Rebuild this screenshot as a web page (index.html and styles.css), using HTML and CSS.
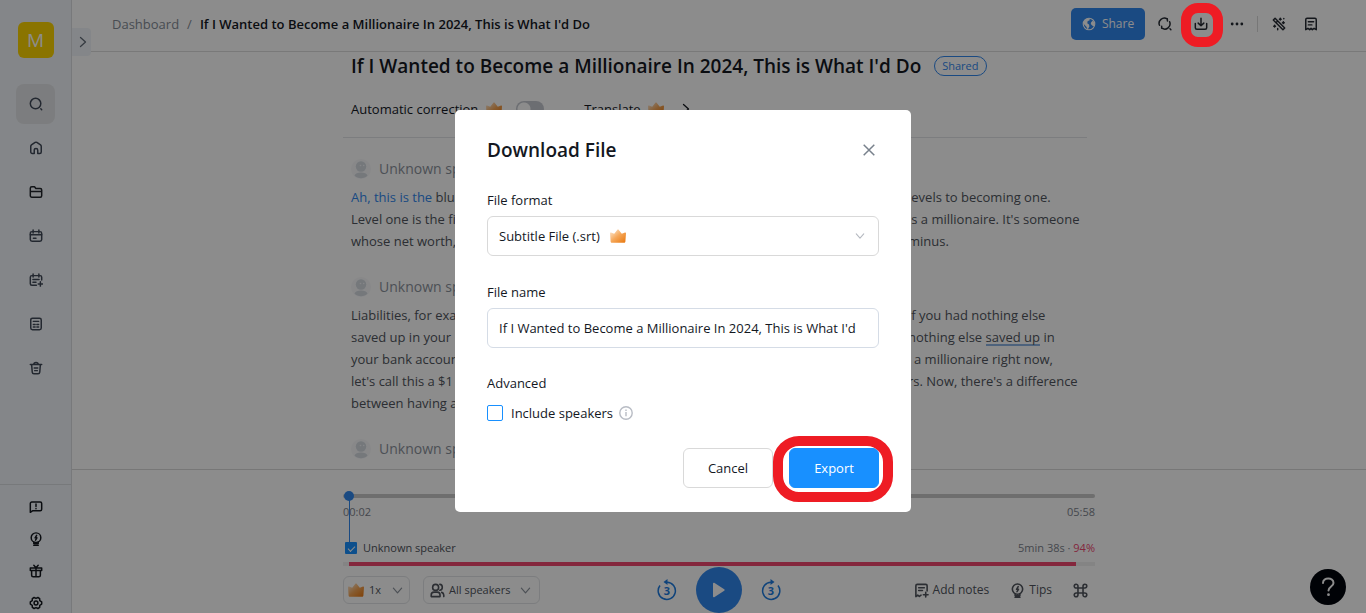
FILE: index.html
```html
<!DOCTYPE html>
<html lang="en">
<head>
<meta charset="utf-8">
<title>If I Wanted to Become a Millionaire In 2024, This is What I'd Do</title>
<link rel="stylesheet" href="styles.css">
</head>
<body>
<svg class="defs" aria-hidden="true">
  <defs>
    <linearGradient id="gold" x1="0" y1="0" x2="1" y2="1">
      <stop offset="0.15" stop-color="#fbd9b4"/><stop offset="0.5" stop-color="#f5a657"/><stop offset="1" stop-color="#e8760c"/>
    </linearGradient>
    <symbol id="crown" viewBox="0 0 16 14"><path fill="url(#gold)" d="M0 4.200c0-.7.600-.9 1-.6l3.200 1.200L7.200 1c.4-.6 1.200-.6 1.600 0l3 3.800L15 3.600c.4-.3 1-.1 1 .6l-.6 8.300c-.1.800-.6 1.300-1.300 1.300H1.900c-.7 0-1.200-.5-1.300-1.300z"/></symbol>
    <symbol id="down" viewBox="0 0 12 12"><path d="M1.500 3.500 6 8.500l4.500-5"/></symbol>
    <symbol id="right" viewBox="0 0 12 12"><path d="m3.500 1.500 5 4.500-5 4.500"/></symbol>
    <symbol id="bulb" viewBox="0 0 16 16"><circle cx="8" cy="6.500" r="5.500"/><path d="M5.500 11.500v2h5v-2M5.500 15.300h5M8.700 3.800 7 6.700h2L7.500 9.300"/></symbol>
    <symbol id="face" viewBox="0 0 20 20"><circle cx="10" cy="10" r="10" fill="#f7f8fa"/><circle cx="10" cy="7.500" r="5.200" fill="#d5dae1"/><path d="M3.500 16.500c1-4 12-4 13 0-3 3.500-10 3.500-13 0z" fill="#d5dae1"/><circle cx="9.500" cy="6.500" r=".8" fill="#f3f5f7"/><circle cx="12.700" cy="6.500" r=".8" fill="#f3f5f7"/></symbol>
  </defs>
</svg>

<div class="app">
  <nav class="sidebar" aria-label="Main">
    <div class="side-top">
      <div class="avatar">M</div>
      <button class="side-btn active" aria-label="Search"><svg class="ico" viewBox="0 0 16 16"><circle cx="7.500" cy="7.500" r="6"/><path d="m13.500 13.500 1 1"/></svg></button>
      <button class="side-btn" aria-label="Home"><svg class="ico" viewBox="0 0 16 16"><path d="M2 6.200c0-.7.3-1.300.8-1.700L7 1.700c.6-.4 1.400-.4 2 0l4.200 2.800c.5.400.8 1 .8 1.700V12.500c0 1-.8 1.700-1.700 1.700H10V10.500a2 2 0 0 0-4 0v3.700H3.700c-1 0-1.700-.8-1.700-1.700z"/></svg></button>
      <button class="side-btn dark" aria-label="Folders"><svg class="ico" viewBox="0 0 16 16"><path d="M1.500 3.700c0-.9.700-1.700 1.700-1.700h3.100l1.500 2h5c1 0 1.700.8 1.700 1.700v6.600c0 .9-.7 1.700-1.700 1.700H3.200c-1 0-1.700-.8-1.700-1.700zM1.500 7.500h13"/></svg></button>
      <button class="side-btn" aria-label="Calendar"><svg class="ico" viewBox="0 0 16 16"><rect x="1.500" y="3" width="13" height="11" rx="2"/><path d="M1.500 6.700h13M4.700 1v3.500M11.300 1v3.500M5 10.500h3"/></svg></button>
      <button class="side-btn" aria-label="New event"><svg class="ico" viewBox="0 0 16 16"><path d="M8.500 14H3.300c-1 0-1.800-.8-1.800-1.800V4.800C1.500 3.800 2.300 3 3.300 3h9.400c1 0 1.800.8 1.800 1.800V8M4.700 1v3.500M11.300 1v3.500M4.500 7.500h7M4.500 10.500H8M13 10v5M10.500 12.500h5"/></svg></button>
      <button class="side-btn" aria-label="Reports"><svg class="ico" viewBox="0 0 16 16"><rect x="2" y="1.500" width="12" height="13" rx="2"/><path d="M5 5h6M5 8.500h2M9 8.500h2M5 11.500h2M9 11.500h2"/></svg></button>
      <button class="side-btn" aria-label="Trash"><svg class="ico" viewBox="0 0 16 16"><path d="M1.500 4h13M3 4l.7 8.700c.1 1 .9 1.800 1.900 1.800h4.800c1 0 1.800-.8 1.900-1.800L13 4M5.500 4c0-3 5-3 5 0M6 8h4M6.500 11h3"/></svg></button>
    </div>
    <div class="side-bottom">
      <button class="side-small" aria-label="Feedback"><svg class="ico" viewBox="0 0 16 16"><path d="M1.500 14V4c0-1 .7-1.700 1.700-1.700h9.600c1 0 1.700.7 1.700 1.700v6.700c0 1-.7 1.700-1.700 1.700H4zM8 4.700V7.500M8 9.700v.3"/></svg></button>
      <button class="side-small" aria-label="Tips"><svg class="ico"><use href="#bulb"/></svg></button>
      <button class="side-small" aria-label="Gifts"><svg class="ico" viewBox="0 0 16 16"><path d="M1.500 4.500h13v3h-13zM3 7.500v5.300c0 1 .7 1.700 1.700 1.700h6.600c1 0 1.700-.7 1.700-1.700V7.500M8 4.500v10M5.500 1.500 8 4.300l2.500-2.800"/></svg></button>
      <button class="side-small" aria-label="Settings"><svg class="ico" viewBox="0 0 16 16"><circle cx="8" cy="8" r="2.200"/><path d="M5.800 1.700 8 2.800l2.200-1.100 2 1.200.1 2.500 2.200 1.400v2.400l-2.200 1.400-.1 2.500-2 1.200L8 13.200l-2.200 1.100-2-1.200-.1-2.500L1.500 9.200V6.800l2.200-1.400.1-2.500z"/></svg></button>
    </div>
  </nav>

  <main class="main">
    <header class="topbar">
      <button class="expand" aria-label="Expand sidebar"><svg class="ico chev"><use href="#right"/></svg></button>
      <div class="crumbs"><a href="#">Dashboard</a><span class="slash">/</span><span class="here">If I Wanted to Become a Millionaire In 2024, This is What I'd Do</span></div>
      <div class="tools">
        <button class="share"><svg viewBox="0 0 16 16"><circle cx="8" cy="8" r="6.600" fill="none" stroke="#fff" stroke-width="1.300"/><path fill="#fff" d="M2 5.500C3.500 2.500 6 1.300 9 1.500L8.500 4 6.500 4.700 6 7l2 1.500.5 2L6.500 14.500 5 11 2 8zM10.500 6l2-2 2 3.500-.5 3-2-.5-2-2z"/></svg>Share</button>
        <button class="tool" aria-label="Find and replace"><svg class="ico" viewBox="0 0 16 16"><path d="M1.700 9.500A6 6 0 0 1 10.500 2.200M13.300 5.500A6 6 0 0 1 4.500 12.800M10.800 4.500l-.2-2.400M4.200 10.500v2.300M13.700 13.500l1 1"/></svg></button>
        <button class="tool marked" aria-label="Download"><svg class="ico" viewBox="0 0 16 16"><path d="M8 1.300v8.500M4.800 7 8 10l3.200-3M1.500 7.500v4.700c0 1 .8 1.800 1.800 1.800h9.400c1 0 1.800-.8 1.800-1.800V7.500"/></svg></button>
        <button class="tool" aria-label="More"><svg class="ico" viewBox="0 0 16 16"><g fill="#262b33" stroke="none"><circle cx="2.500" cy="8" r="1.600"/><circle cx="8" cy="8" r="1.600"/><circle cx="13.500" cy="8" r="1.600"/></g></svg></button>
        <span class="sep"></span>
        <button class="tool" aria-label="AI tools"><svg class="ico" viewBox="0 0 16 16"><path d="m1.500 3.500 2-2 11 11-2 2zM4.500 6.500l2-2M9.500 1.500v2M8.500 2.500h2M13 5.500v2M12 6.500h2M3 9.500v2M2 10.500h2M6.500 13v1.500M13.500 1.800v.2"/></svg></button>
        <button class="tool" aria-label="Notes"><svg class="ico" viewBox="0 0 16 16"><path d="M2 14.500V3c0-.9.600-1.500 1.500-1.500h9c.9 0 1.500.6 1.500 1.500v11.500l-2.500-1.500-2 1.500L8 13l-1.500 1.500-2-1.500zM5 5.500h6M5 9h4"/></svg></button>
      </div>
    </header>

    <section class="scroller">
      <article class="doc">
        <div class="title-row"><h1>If I Wanted to Become a Millionaire In 2024, This is What I'd Do</h1><span class="shared">Shared</span></div>
        <div class="options">
          <label class="opt" for="auto">Automatic correction <svg class="crown"><use href="#crown"/></svg></label>
          <input class="switch" id="auto" type="checkbox" role="switch">
          <button class="translate">Translate <svg class="crown"><use href="#crown"/></svg><svg class="ico chev"><use href="#right"/></svg></button>
        </div>
        <div class="block">
          <div class="speaker"><svg><use href="#face"/></svg>Unknown speaker</div>
          <p class="line"><span><span class="played">Ah, this is the</span> blueprint</span><span>levels to becoming one.</span></p>
          <p class="line"><span>Level one is the first</span><span>is a millionaire. It's someone</span></p>
          <p class="line"><span>whose net worth,</span><span>minus.</span></p>
        </div>
        <div class="block">
          <div class="speaker"><svg><use href="#face"/></svg>Unknown speaker</div>
          <p class="line"><span>Liabilities, for example</span><span>if you had nothing else</span></p>
          <p class="line"><span>saved up in your</span><span>nothing else <span class="mark">saved up</span> in</span></p>
          <p class="line"><span>your bank account</span><span class="inset">a millionaire right now,</span></p>
          <p class="line"><span>let's call this a $1</span><span>rs. Now, there's a difference</span></p>
          <p class="line"><span>between having a</span></p>
        </div>
        <div class="block">
          <div class="speaker"><svg><use href="#face"/></svg>Unknown speaker</div>
        </div>
      </article>
    </section>

    <footer class="player">
      <div class="player-in">
        <div class="track"><span class="handle"></span></div>
        <div class="row times"><span>00:02</span><span>05:58</span></div>
        <div class="row who">
          <label class="who-name"><input type="checkbox" class="tick" checked>Unknown speaker</label>
          <span class="stat">5min 38s · <span class="pct">94%</span></span>
        </div>
        <div class="talk"><span class="talk-fill"></span></div>
        <div class="controls">
          <div class="group">
            <button class="pill"><svg class="crown"><use href="#crown"/></svg>1x<svg class="ico chev"><use href="#down"/></svg></button>
            <button class="pill wide"><svg class="ico small" viewBox="0 0 16 16"><circle cx="6" cy="4.700" r="3.200"/><path d="M1.300 14.500v-1.800c0-1.700 1.300-3 3-3h3.400c1.700 0 3 1.300 3 3v1.800zM10.500 1.500c3.500.2 3.500 6 0 6.300M12.500 10c1.500.5 2.200 1.500 2.200 3v1.500"/></svg>All speakers<svg class="ico chev"><use href="#down"/></svg></button>
          </div>
          <div class="group center">
            <button class="skip" aria-label="Back 3 seconds"><svg viewBox="0 0 20 22"><path fill="none" stroke="#1c7be0" stroke-width="1.500" d="M3 6.500A8.600 8.600 0 1 0 10 3.200H8"/><path fill="#1c7be0" d="M10.500 0v6L6.500 3z"/><text x="10" y="16">3</text></svg></button>
            <button class="play" aria-label="Play"><svg viewBox="0 0 14 16"><path fill="#fff" d="M1 1.500c0-.7.600-1 1.200-.7l10 6.400c.6.400.6 1.200 0 1.600l-10 6.400c-.6.300-1.200 0-1.200-.7z"/></svg></button>
            <button class="skip" aria-label="Forward 3 seconds"><svg viewBox="0 0 20 22"><path fill="none" stroke="#1c7be0" stroke-width="1.500" d="M17 6.500A8.600 8.600 0 1 1 10 3.200h2"/><path fill="#1c7be0" d="M9.500 0v6l4-3z"/><text x="10" y="16">3</text></svg></button>
          </div>
          <div class="group end">
            <button class="plain"><svg class="ico small" viewBox="0 0 16 16"><path d="M7.500 13 5.700 14.300 4 13l-2 1.500V3c0-.9.600-1.500 1.500-1.500h9c.9 0 1.500.6 1.500 1.500v5.500M5 5h6M5 8h4M12.500 10v5M10 12.500h5"/></svg>Add notes</button>
            <button class="plain"><svg class="ico small"><use href="#bulb"/></svg>Tips</button>
            <button class="plain" aria-label="Shortcuts"><svg class="ico small" viewBox="0 0 16 16"><path d="M5.300 5.300h5.400v5.400H5.300zM5.300 5.300H3.500a2 2 0 1 1 1.800-2zM10.700 5.300V3.500a2 2 0 1 1 2 1.800zM10.700 10.700h1.800a2 2 0 1 1-1.800 2zM5.300 10.700v1.800a2 2 0 1 1-2-1.800z"/></svg></button>
          </div>
        </div>
      </div>
    </footer>
  </main>
  <button class="help" aria-label="Help"><svg viewBox="0 0 16 20"><path fill="none" stroke="#fff" stroke-width="2" stroke-linecap="round" d="M3 6c0-6 10.500-6 10.500 0 0 3.500-5 3.500-5 7.500"/><circle cx="8.500" cy="17.700" r="1.400" fill="#fff"/></svg></button>
</div>

<div class="mask">
  <form class="modal" role="dialog" aria-labelledby="dlg">
    <div class="modal-head"><h2 id="dlg">Download File</h2><button type="button" class="close" aria-label="Close"><svg viewBox="0 0 12 12"><path d="m.7.7 10.600 10.600M11.300.7.7 11.300"/></svg></button></div>
    <div class="field">
      <label for="format">File format</label>
      <div class="select-wrap">
        <select id="format"><option>Subtitle File (.srt)</option></select>
        <svg class="crown over"><use href="#crown"/></svg>
        <svg class="ico chev arrow"><use href="#down"/></svg>
      </div>
    </div>
    <div class="field">
      <label for="name">File name</label>
      <input id="name" type="text" value="If I Wanted to Become a Millionaire In 2024, This is What I'd">
    </div>
    <fieldset class="advanced">
      <legend>Advanced</legend>
      <label class="include"><input type="checkbox" class="box">Include speakers<svg viewBox="0 0 14 14"><circle cx="7" cy="7" r="6.200"/><path d="M7 6v4.300M7 3.500V5"/></svg></label>
    </fieldset>
    <div class="actions"><button type="button" class="btn">Cancel</button><button type="submit" class="btn primary">Export</button></div>
  </form>
</div>
<div class="ring-layer"><span class="ring"></span></div>
</body>
</html>
```

FILE: styles.css
```css
* { box-sizing: border-box; }
body { margin: 0; height: 100vh; overflow: hidden; background: #fff; color: #14181f; font: 13px/22px "Open Sans", "Noto Sans", sans-serif; }
button, input, select { font: inherit; color: inherit; margin: 0; }
button { display: flex; align-items: center; justify-content: center; padding: 0; border: 0; background: none; }
h1, h2, p { margin: 0; }
h1, h2 { font-weight: 600; }
svg { display: block; flex: none; }
.defs { position: absolute; width: 0; height: 0; }
.ico { width: 16px; height: 16px; fill: none; stroke: currentColor; stroke-width: 1.7; stroke-linecap: round; stroke-linejoin: round; }
.chev { width: 12px; height: 12px; stroke-width: 1.3; }
.small { width: 15px; height: 15px; }
.crown { width: 16px; height: 14px; }

.app { display: flex; height: 100vh; }
.sidebar { display: flex; flex-direction: column; justify-content: space-between; flex: none; width: 72px; background: #f1f5f9; border-right: 1px solid #dadde1; }
.side-top { display: flex; flex-direction: column; align-items: center; gap: 4px; padding-top: 22px; color: #404958; }
.avatar { width: 36px; height: 36px; margin-bottom: 22px; border-radius: 6px; background: #fcd400; color: #fff; font-size: 19px; line-height: 36px; text-align: center; }
.side-btn { width: 39px; height: 40px; border-radius: 8px; }
.side-btn svg, .side-small svg { width: 14px; height: 14px; }
.side-btn.active { background: #e2e4e7; }
.side-btn.dark { color: #22262d; }
.side-bottom { flex: none; height: 129px; display: flex; flex-direction: column; align-items: center; padding-top: 6px; border-top: 1px solid #d9dce0; color: #14181f; overflow: hidden; }
.side-small { flex: none; width: 32px; height: 32px; }

.main { flex: 1; min-width: 0; display: flex; flex-direction: column; }
.topbar { display: flex; align-items: flex-start; flex: none; height: 52px; border-bottom: 1px solid #dcdcdc; padding-right: 41px; }
.expand { width: 19px; height: 28px; margin-top: 28px; padding-left: 2px; border-radius: 0 4px 4px 0; background: #f1f5f9; color: #626b78; }
.crumbs { display: flex; gap: 8px; padding: 13px 0 0 21px; white-space: nowrap; }
.crumbs a { color: #848b96; text-decoration: none; }
.slash { color: #848b96; }
.here { color: #14181f; font-weight: 600; }
.tools { display: flex; align-items: center; height: 48px; margin-left: auto; color: #262b33; }
.share { width: 74px; height: 32px; gap: 6px; border-radius: 5px; background: #3187ed; color: #fff; font-size: 12px; }
.share svg { width: 14px; height: 14px; }
.tool { width: 36px; height: 32px; }
.tool svg { width: 14px; height: 14px; }
.share + .tool { margin-left: 2px; }
.sep { width: 1px; height: 16px; margin: 0 3px 0 2px; background: #d9d9d9; }
.tool + .tool:last-child { width: 28px; }

.scroller { flex: 1; min-height: 0; overflow: hidden; }
.doc { width: 752px; max-width: 100%; margin: 0 auto; }
.title-row { display: flex; align-items: center; gap: 13px; height: 28px; padding-left: 8px; white-space: nowrap; }
h1 { font-size: 19px; line-height: 28px; }
.shared { height: 20px; padding: 0 7px; border: 1px solid #3187ed; border-radius: 10px; color: #3187ed; font-size: 11px; line-height: 18px; }
.options { display: flex; align-items: center; height: 58px; margin: 0 8px 20px 0; padding-left: 8px; border-bottom: 1px solid #e2e4e7; }
.opt, .translate { display: flex; align-items: center; gap: 8px; }
.switch { appearance: none; width: 28px; height: 16px; margin: 0 40px 0 14px; border-radius: 8px; background: radial-gradient(circle at 8px 8px, #fff 6px, #c5c8d0 7px); }
.translate .crown { margin-left: -1px; }
.translate .chev { margin-left: 8px; }
.block { padding: 0 8px 24px; color: #50555d; }
.speaker { display: flex; align-items: center; gap: 8px; height: 22px; margin-bottom: 6px; color: #8b929c; font-size: 14px; }
.speaker svg { width: 20px; height: 20px; }
.line { display: grid; grid-template-columns: 557px 1fr; white-space: nowrap; }
.played { color: #3187ed; }
.inset { padding-left: 6px; }
.mark { display: inline-block; height: 20px; line-height: 22px; border-bottom: 2px solid #8db3e2; }

.player { flex: none; height: 144px; border-top: 1px solid #d9d9d9; color: #50555d; font-size: 11px; }
.player-in { width: 752px; max-width: 100%; margin: 0 auto; padding-top: 24px; }
.track { position: relative; height: 4px; border-radius: 2px; background: #c8c8c8; }
.handle { position: absolute; left: 1px; top: -3px; width: 10px; height: 10px; border-radius: 50%; background: #3187ed; }
.handle::after { content: ""; position: absolute; left: 5px; top: 9px; width: 1px; height: 43px; background: #3187ed; }
.row { display: flex; justify-content: space-between; align-items: center; }
.times { height: 28px; color: #7d838d; }
.who { height: 22px; margin: 11px 0 3px; }
.who-name { display: flex; align-items: center; gap: 6px; padding-left: 2px; }
.tick { appearance: none; width: 12px; height: 12px; border-radius: 1px; background: #1890ff; display: grid; place-items: center; }
.tick::before { content: ""; width: 6px; height: 3px; border: solid #fff; border-width: 0 0 1px 1px; transform: rotate(-45deg); }
.stat { color: #7d838d; }
.pct { color: #f04770; }
.talk { height: 4px; padding: 0 19px 0 6px; background: #f0f0f0; }
.talk-fill { display: block; height: 4px; background: #f04770; }
.controls { display: grid; grid-template-columns: 1fr auto 1fr; align-items: center; height: 48px; }
.group { display: flex; align-items: center; gap: 13px; }
.pill { height: 28px; gap: 5px; padding: 0 6px 0 4px; border: 1px solid #e2e4e7; border-radius: 6px; }
.pill .chev { width: 11px; height: 11px; margin-left: 6px; color: #8b929c; }
.wide { gap: 4px; padding: 0 8px 0 6px; }
.center { gap: 18px; }
.skip { width: 22px; height: 24px; }
.skip svg { width: 20px; height: 22px; }
.skip text { fill: #1c7be0; font-size: 11px; font-weight: 700; text-anchor: middle; }
.play { width: 46px; height: 46px; border-radius: 50%; background: #3187ed; }
.play svg { width: 14px; height: 16px; }
.end { justify-content: flex-end; gap: 21px; padding-right: 7px; font-size: 12px; }
.plain { gap: 4px; white-space: nowrap; }
.help { position: fixed; right: 20px; bottom: 8px; width: 36px; height: 36px; border-radius: 50%; background: #00040c; }
.help svg { width: 16px; height: 20px; }

.mask { position: fixed; inset: 0; padding-top: 110px; background: rgba(0, 0, 0, 0.45); }
.modal { width: 456px; margin: 0 auto; padding: 26px 32px 24px; border-radius: 5px; background: #fff; }
.modal-head { display: flex; align-items: center; justify-content: space-between; height: 28px; margin-bottom: 25px; }
h2 { font-size: 19px; line-height: 28px; }
.close { width: 20px; height: 20px; }
.close svg { width: 12px; height: 12px; fill: none; stroke: #78818c; stroke-width: 1.5; }
.field { display: flex; flex-direction: column; gap: 5px; margin-bottom: 25px; }
.field input, .field select { appearance: none; width: 100%; height: 40px; padding: 0 11px; border: 1px solid #d9d9d9; border-radius: 6px; background: #fff; }
.field input { border-color: #d5dce6; }
.select-wrap { position: relative; }
.over { position: absolute; left: 123px; top: 13px; }
.arrow { position: absolute; right: 14px; top: 15px; width: 10px; height: 10px; color: #b5b9c0; }
.field + .advanced { margin: -1px 0 24px; padding: 0; border: 0; }
.advanced legend { padding: 0; margin-bottom: 8px; }
.include { display: flex; align-items: center; height: 22px; }
.box { appearance: none; width: 16px; height: 16px; margin-right: 8px; border: 1px solid #1890ff; border-radius: 2px; background: #fff; }
.include svg { width: 14px; height: 14px; margin-left: 6px; fill: none; stroke: #b8bcc4; stroke-width: 1.4; }
.actions { display: flex; justify-content: flex-end; gap: 16px; }
.btn { position: relative; width: 90px; height: 40px; border: 1px solid #d9d9d9; border-radius: 6px; }
.primary { border-color: #1890ff; background: #1890ff; color: #fff; }
.primary::after { content: ""; position: absolute; inset: -13px -15px -15px -17px; border: 10px solid #ee1c24; border-radius: 26px; }
.ring-layer { position: fixed; top: 3px; right: 143px; width: 42px; height: 44px; pointer-events: none; }
.ring { display: block; height: 100%; border: 10px solid #ee1c24; border-radius: 17px; }
```
